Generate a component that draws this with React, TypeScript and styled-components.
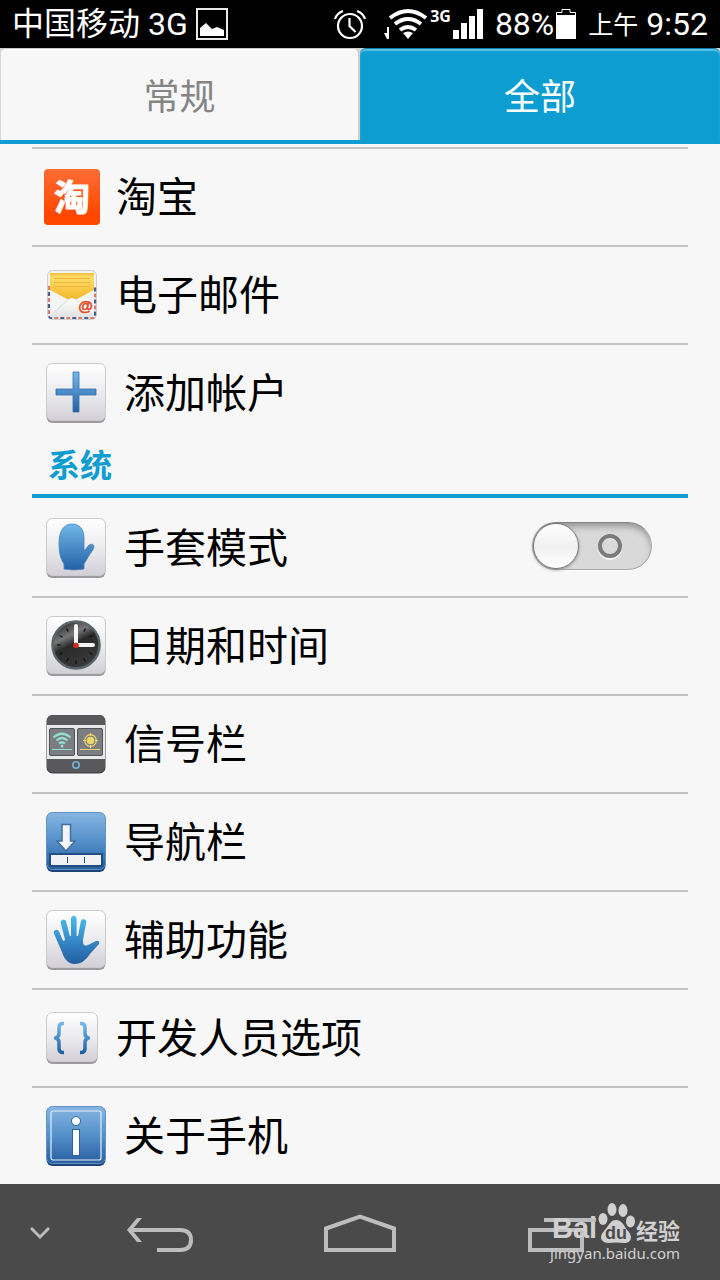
import React, { useState } from "react";
import styled, { createGlobalStyle } from "styled-components";

const blue = "#0d9dd1";

const GlobalStyle = createGlobalStyle`
  *, *::before, *::after { box-sizing: border-box; }
  body {
    margin: 0;
    background: #f7f7f7;
    font-family: Roboto, "Noto Sans CJK SC", sans-serif;
    color: #000;
  }
  button { font-family: inherit; }
  svg { display: block; flex: none; }
`;

const Screen = styled.div`
  min-height: 100vh;
  display: flex;
  flex-direction: column;
`;

const StatusBar = styled.header`
  height: 48px;
  padding: 0 12px;
  background: #000;
  color: #fff;
  font-size: 32px;
  line-height: 48px;
  display: flex;
  align-items: center;
  justify-content: space-between;
  white-space: nowrap;
`;

const StatusGroup = styled.div`
  display: flex;
  align-items: center;
  gap: 8px;
`;

const Signal = styled.div`
  display: flex;
  align-items: center;
  gap: 2px;
  margin: 0 4px 0 10px;
`;

const Network = styled.span`
  align-self: flex-start;
  font: 700 16px/16px "Open Sans", sans-serif;
`;

const Battery = styled.div`
  display: flex;
  align-items: center;
  gap: 2px;
`;

const Meridiem = styled.span`
  font-size: 25px;
  margin-left: 4px;
  padding-top: 4px;
`;

const Tabs = styled.nav`
  display: grid;
  grid-template-columns: 1fr 1fr;
  height: 96px;
  border-bottom: 4px solid ${blue};
  background: #d4d4d4;
`;

const Tab = styled.button<{ $active?: boolean }>`
  border: 0;
  border-top: 1px solid ${(p) => (p.$active ? "#0a7fab" : "#c9c9c9")};
  border-right: ${(p) => (p.$active ? "0" : "2px solid #cfcfcf")};
  border-left: ${(p) => (p.$active ? "0" : "1px solid #d8d8d8")};
  border-radius: 6px 6px 0 0;
  padding: 6px 0 0;
  font-size: 36px;
  line-height: 48px;
  color: ${(p) => (p.$active ? "#fff" : "#858585")};
  background: ${(p) => (p.$active ? blue : "#f7f7f7")};
  box-shadow: inset 0 2px 1px ${(p) => (p.$active ? "#5fc0e4" : "#fff")};
`;

const Content = styled.main`
  flex: 1;
  padding: 3px 32px 0;
`;

const List = styled.ul`
  list-style: none;
  margin: 0;
  padding: 0;
`;

const Item = styled.li`
  border-top: 2px solid #c4c4c4;
  &[data-first="true"] { border-top-color: transparent; }
`;

const Row = styled.button`
  width: 100%;
  height: 96px;
  padding: 0 36px 0 12px;
  border: 0;
  background: none;
  color: inherit;
  display: flex;
  align-items: center;
  gap: 16px;
  font-size: 41px;
  line-height: 60px;
  text-align: left;
`;

const IconSlot = styled.span<{ $small?: boolean }>`
  width: ${(p) => (p.$small ? 56 : 64)}px;
  flex: none;
  display: flex;
  justify-content: center;
`;

const Label = styled.span`
  flex: 1;
  padding-top: 2px;
`;

const SectionTitle = styled.h2`
  margin: 0;
  height: 57px;
  padding-left: 16px;
  border-bottom: 4px solid ${blue};
  color: ${blue};
  font-size: 32px;
  font-weight: 700;
  line-height: 50px;
`;

const Toggle = styled.input`
  appearance: none;
  margin: 0 0 4px;
  width: 120px;
  height: 48px;
  flex: none;
  border-radius: 24px;
  border: 1px solid #a9a9a9;
  border-top-color: #858585;
  background: #d9d9d9;
  box-shadow: inset 0 5px 7px -2px #8e8e8e, 0 1px 0 #fff;
  display: flex;
  align-items: center;
  gap: 19px;
  &::before {
    content: "";
    width: 46px;
    height: 46px;
    border-radius: 50%;
    border: 1px solid #777;
    background: linear-gradient(#fff, #f0f0f0 50%, #fff);
    box-shadow: 0 1px 3px #888;
  }
  &::after {
    content: "";
    width: 24px;
    height: 24px;
    border-radius: 50%;
    border: 4px solid #7b7b7b;
    box-shadow: 0 2px 0 #f4f4f4, inset 0 1px 0 #eee;
  }
  &:checked { background: ${blue}; flex-direction: row-reverse; }
`;

const NavBar = styled.footer`
  position: relative;
  height: 96px;
  background: #4a4a4b;
  display: grid;
  grid-template-columns: 1fr 2fr 3fr 2fr 1fr;
`;

const NavButton = styled.button`
  border: 0;
  padding: 0;
  background: none;
  color: #bdbdbd;
  display: flex;
  align-items: center;
  justify-content: center;
`;

const Watermark = styled.div`
  position: absolute;
  right: 40px;
  top: 15px;
  width: 128px;
  color: #d0d0d0;
  pointer-events: none;
`;

const Brand = styled.div`
  display: flex;
  align-items: flex-end;
  justify-content: space-between;
  height: 46px;
  font: 700 29px/34px "Liberation Sans", sans-serif;
`;

const Paw = styled.svg`
  margin: 0 -2px 1px;
`;

const BrandCn = styled.span`
  font: 700 22px/32px "Noto Sans CJK SC", sans-serif;
`;

const Site = styled.div`
  display: flex;
  justify-content: flex-end;
  font: 400 15px/16px "Noto Sans", sans-serif;
`;

function Tile({ id, size = 60, dark, children }: { id: string; size?: number; dark?: boolean; children: React.ReactNode }) {
  return (
    <svg width={size} height={size} viewBox={`0 0 ${size} ${size}`} aria-hidden="true">
      <defs>
        <linearGradient id={`${id}-bg`} x1="0" y1="0" x2="0" y2="1">
          <stop offset="0" stopColor={dark ? "#86b6e2" : "#ffffff"} />
          <stop offset="0.5" stopColor={dark ? "#5490ca" : "#ececef"} />
          <stop offset="1" stopColor={dark ? "#285f9f" : "#d2cfd6"} />
        </linearGradient>
        <linearGradient id={`${id}-fg`} x1="0" y1="0" x2="0" y2="1">
          <stop offset="0" stopColor="#72b9ea" />
          <stop offset="1" stopColor="#2260a4" />
        </linearGradient>
      </defs>
      <rect x="0.5" y="1" width={size - 1} height={size - 1} rx="6" fill={dark ? "#1c4377" : "#9b9b9f"} />
      <rect x="0.5" y="0.5" width={size - 1} height={size - 3} rx="6" fill={`url(#${id}-bg)`} stroke={dark ? "#5f93c8" : "#cbcbcd"} />
      {children}
    </svg>
  );
}

const TaobaoIcon = () => (
  <svg width="56" height="56" viewBox="0 0 56 56" aria-hidden="true">
    <defs>
      <linearGradient id="taobao" x1="0" y1="0" x2="0" y2="1">
        <stop offset="0" stopColor="#ff6d35" />
        <stop offset="0.8" stopColor="#ff4700" />
      </linearGradient>
    </defs>
    <rect width="56" height="56" rx="4" fill="url(#taobao)" />
    <text x="28" y="42" textAnchor="middle" fontSize="36" fontWeight="700" fill="#fff" stroke="#fff" strokeWidth="1" strokeLinejoin="round" fontFamily="'Noto Sans CJK SC', sans-serif">淘</text>
  </svg>
);

const MailIcon = () => (
  <svg width="50" height="50" viewBox="0 0 50 50" aria-hidden="true">
    <defs>
      <linearGradient id="letter" x1="0" y1="0" x2="0" y2="1">
        <stop offset="0" stopColor="#f0c03a" />
        <stop offset="0.15" stopColor="#ffdc68" />
        <stop offset="1" stopColor="#f3b92c" />
      </linearGradient>
      <linearGradient id="flap" x1="0" y1="0" x2="0" y2="1">
        <stop offset="0" stopColor="#fff" />
        <stop offset="1" stopColor="#e2e2e2" />
      </linearGradient>
    </defs>
    <rect x="0.5" y="0.5" width="49" height="49" rx="5" fill="#f2f2f2" stroke="#d0d0d0" />
    <path d="M2 16V45q0 3 3 3H45q3 0 3-3V16" fill="none" stroke="#e07a68" strokeWidth="2.200" strokeDasharray="4 8" />
    <path d="M2 22V45q0 3 3 3H45q3 0 3-3V16" fill="none" stroke="#4a5c8e" strokeWidth="2.200" strokeDasharray="4 8" />
    <path d="M3 18H47V47H3z" fill="#f4f4f4" />
    <path d="M3 3H47V20L30 29H20L3 20z" fill="url(#letter)" />
    <path d="M7 8.500H43M7 12.500H43M7 16.500H43" stroke="#ecb840" />
    <path d="M3 47L22 29q3-2 6 0L47 47z" fill="url(#flap)" />
    <path d="M3 46L22 29q3-2 6 0L47 46" fill="none" stroke="#cacaca" strokeWidth="0.700" />
    <circle cx="38.500" cy="36.500" r="7.500" fill="#fff" />
    <text x="38.500" y="41" textAnchor="middle" fontSize="15" fontWeight="700" fill="#e2491d" stroke="#e2491d" strokeWidth="0.500" fontFamily="'Liberation Sans', sans-serif">@</text>
  </svg>
);

const AddIcon = () => (
  <Tile id="add">
    <path d="M27 9h6v17h17v6H33v17h-6V32H10v-6h17z" fill="url(#add-fg)" stroke="#3672ae" strokeWidth="0.800" />
  </Tile>
);

const GloveIcon = () => (
  <Tile id="glove">
    <path d="M18 51v-5C14 40 13 34 13 25 13 13 18 6 26 6c8 0 12 6 12 14v13l5-6q4-2 5 1c0 3-2 5-4 8L38 46v5q-10 2-20 0z" fill="url(#glove-fg)" stroke="#4d84bc" strokeWidth="0.800" />
  </Tile>
);

const ClockIcon = () => (
  <Tile id="clock">
    <defs>
      <linearGradient id="dial" x1="0.200" y1="0" x2="0.700" y2="1">
        <stop offset="0" stopColor="#242424" />
        <stop offset="0.300" stopColor="#777" />
        <stop offset="0.480" stopColor="#2a2a2a" />
        <stop offset="1" stopColor="#3b3b3b" />
      </linearGradient>
    </defs>
    <circle cx="30" cy="29" r="23.500" fill="url(#dial)" stroke="#59656b" strokeWidth="2.500" />
    {Array.from({ length: 12 }, (_, i) => (
      <path key={i} d="M30 10v3.500" stroke="#111" strokeWidth="1.300" transform={`rotate(${i * 30} 30 29)`} />
    ))}
    <path d="M30 10v19h17" fill="none" stroke="#f4f4f4" strokeWidth="4" strokeLinecap="round" />
    <circle cx="30" cy="29.500" r="2.800" fill="#d4281c" />
  </Tile>
);

const SignalBarIcon = () => (
  <svg width="60" height="60" viewBox="0 0 60 60" aria-hidden="true">
    <rect x="0.500" y="1" width="59" height="58.500" rx="6" fill="#48484a" />
    <rect x="1" y="1" width="58" height="57" rx="6" fill="#59595b" />
    <rect x="1" y="11" width="58" height="34" fill="#e9e9ec" />
    <rect x="3.500" y="14.500" width="25" height="27" rx="1.500" fill="#7b7d83" stroke="#515256" />
    <rect x="31.500" y="14.500" width="25" height="27" rx="1.500" fill="#7b7d83" stroke="#515256" />
    <g fill="none" stroke="#8fe0cf" strokeWidth="2.200">
      <path d="M7.500 23.500q8.500-7.500 17 0M10.500 26.500q5.500-5 11 0M13 29.500q3-2.500 6 0" />
      <path d="M6 35.500h20" strokeWidth="1" />
    </g>
    <circle cx="16" cy="32" r="1.500" fill="#8fe0cf" />
    <circle cx="44.500" cy="26.500" r="3.800" fill="#f0d66a" />
    <circle cx="44.500" cy="26.500" r="5.800" fill="none" stroke="#f0d66a" strokeWidth="1.200" />
    <path d="M44.500 19v3M44.500 31v3M37 26.500h3M49 26.500h3M34 35.500h20" stroke="#f0d66a" strokeWidth="1.200" />
    <circle cx="30" cy="51" r="3.200" fill="none" stroke="#71b5dc" strokeWidth="1.600" />
  </svg>
);

const NavigationBarIcon = () => (
  <Tile id="navigation" dark>
    <rect x="3" y="41" width="54" height="14" rx="1" fill="#1f4d84" />
    <rect x="5" y="43" width="50" height="10" fill="#f1f1f3" />
    <path d="M21.500 45v6M38.500 45v6" stroke="#1f4d84" />
    <path d="M16 12.500h8.500V29H29L20 39 11 29h5z" fill="#f4f4f6" stroke="#426f9f" strokeWidth="1.500" />
  </Tile>
);

const HandIcon = () => (
  <Tile id="hand">
    <defs>
      <linearGradient id="palm" gradientUnits="userSpaceOnUse" x1="0" y1="5" x2="0" y2="54">
        <stop offset="0" stopColor="#4cc0ee" />
        <stop offset="0.550" stopColor="#3585c4" />
        <stop offset="1" stopColor="#225f9f" />
      </linearGradient>
    </defs>
    <path d="M10.500 22.500L18 40M17.500 12.500L23 34M37.500 12L33 36" fill="none" stroke="url(#palm)" strokeWidth="5.500" strokeLinecap="round" />
    <path d="M25 8q2.800-5 5.600 0v28H25z" fill="url(#palm)" />
    <path d="M13 29l5 2 4-5h13l2 5q0 6 5 4l8-4q4-1 3 3L44 44q-6 10-16 10-6 0-10-7-3-6-5-18z" fill="url(#palm)" />
  </Tile>
);

const BracesIcon = () => (
  <Tile id="braces" size={52}>
    <path d="M18 11.500h-1q-4 0-4 4v6q0 3.500-3.500 4.500 3.500 1 3.500 4.500v6q0 4 4 4h1M34 11.500h1q4 0 4 4v6q0 3.500 3.500 4.500-3.500 1-3.500 4.500v6q0 4-4 4h-1" fill="none" stroke="url(#braces-fg)" strokeWidth="3.500" strokeLinejoin="round" />
  </Tile>
);

const InfoIcon = () => (
  <Tile id="info" dark>
    <rect x="5" y="5" width="50" height="49" rx="2" fill="none" stroke="#e3effa" strokeWidth="1.200" />
    <circle cx="30" cy="15" r="4.500" fill="#fff" stroke="#2b629c" />
    <rect x="26.500" y="23.500" width="7" height="26" fill="#fff" stroke="#2b629c" />
  </Tile>
);

interface Entry {
  label: string;
  icon: React.ReactNode;
  small?: boolean;
}

const accounts: Entry[] = [
  { label: "淘宝", icon: <TaobaoIcon />, small: true },
  { label: "电子邮件", icon: <MailIcon />, small: true },
  { label: "添加帐户", icon: <AddIcon /> },
];

const system: Entry[] = [
  { label: "日期和时间", icon: <ClockIcon /> },
  { label: "信号栏", icon: <SignalBarIcon /> },
  { label: "导航栏", icon: <NavigationBarIcon /> },
  { label: "辅助功能", icon: <HandIcon /> },
  { label: "开发人员选项", icon: <BracesIcon />, small: true },
  { label: "关于手机", icon: <InfoIcon /> },
];

const EntryItem = ({ label, icon, small }: Entry) => (
  <Item>
    <Row type="button">
      <IconSlot $small={small}>{icon}</IconSlot>
      <Label>{label}</Label>
    </Row>
  </Item>
);

export default function App() {
  const [glove, setGlove] = useState(false);
  return (
    <Screen>
      <GlobalStyle />
      <StatusBar>
        <StatusGroup>
          <span>中国移动 3G</span>
          <svg width="32" height="32" viewBox="0 0 32 32" aria-hidden="true">
            <rect x="1" y="1" width="30" height="30" fill="none" stroke="#e8e8e8" strokeWidth="2" />
            <path d="M4 28v-8l6-5 6 6 5-2 7 3v6z" fill="#fff" />
          </svg>
        </StatusGroup>
        <StatusGroup>
          <svg width="32" height="32" viewBox="0 0 32 32" fill="none" stroke="#fff" strokeWidth="2.200" aria-hidden="true">
            <circle cx="16" cy="18" r="12" />
            <path d="M15.500 10v8l6 6M1 11q2-6 8-8M31 11q-2-6-8-8" />
          </svg>
          <Signal>
            <svg width="44" height="32" viewBox="0 0 44 32" aria-hidden="true">
              <path d="M3 19h2v12H3l-3-6h3z" fill="#fff" />
              <g fill="none" stroke="#fff" strokeWidth="4">
                <path d="M6 10Q24-4 42 10" />
                <path d="M11 16q13-10 26 0" />
                <path d="M16 22q8-6 16 0" />
              </g>
              <path d="M19 25q5-3 10 0l-5 6z" fill="#fff" />
            </svg>
            <Network>3G</Network>
            <svg width="30" height="30" viewBox="0 0 30 30" fill="#fff" aria-hidden="true">
              <path d="M0 21h6v9H0zM8 14h6v16H8zM16 7h6v23h-6zM24 0h6v30h-6z" />
            </svg>
          </Signal>
          <Battery>
            <span>88%</span>
            <svg width="20" height="30" viewBox="0 0 20 30" aria-hidden="true">
              <path d="M0 6h20v24H0z" fill="#fff" />
              <path d="M0.500 6V3.500H6V0.500h8v3h5.500V6" fill="#000" stroke="#fff" />
            </svg>
          </Battery>
          <Meridiem>上午</Meridiem>
          <span>9:52</span>
        </StatusGroup>
      </StatusBar>
      <Tabs>
        <Tab type="button">常规</Tab>
        <Tab type="button" $active>全部</Tab>
      </Tabs>
      <Content>
        <List>
          {accounts.map((e) => <EntryItem key={e.label} {...e} />)}
        </List>
        <SectionTitle>系统</SectionTitle>
        <List>
          <Item data-first="true">
            <Row as="label">
              <IconSlot><GloveIcon /></IconSlot>
              <Label>手套模式</Label>
              <Toggle type="checkbox" checked={glove} onChange={(e) => setGlove(e.target.checked)} />
            </Row>
          </Item>
          {system.map((e) => <EntryItem key={e.label} {...e} />)}
        </List>
      </Content>
      <NavBar>
        <NavButton type="button" aria-label="隐藏导航栏">
          <svg width="24" height="24" viewBox="0 0 24 24" fill="none" stroke="currentColor" strokeWidth="3">
            <path d="M3 8l9 9 9-9" />
          </svg>
        </NavButton>
        <NavButton type="button" aria-label="返回">
          <svg width="72" height="48" viewBox="0 0 72 48" fill="currentColor" aria-hidden="true">
            <path d="M6 22h50q11 0 11 10t-11 10H33" fill="none" stroke="currentColor" strokeWidth="4" />
            <path d="M13 10h5L8 22l10 12h-5L3 22z" />
          </svg>
        </NavButton>
        <NavButton type="button" aria-label="主屏幕">
          <svg width="72" height="48" viewBox="0 0 72 48" fill="none" stroke="currentColor" strokeWidth="4">
            <path d="M2 20.500L36 8.500l34 12V42H2z" />
          </svg>
        </NavButton>
        <NavButton type="button" aria-label="最近任务">
          <svg width="80" height="48" viewBox="0 0 80 48" fill="none" stroke="currentColor" strokeWidth="4">
            <path d="M10 22h52v20H10zM24 12h52" />
          </svg>
        </NavButton>
        <Watermark>
          <Brand>
            <span>Bai</span>
            <Paw width="38" height="42" viewBox="0 0 38 42" fill="currentColor" aria-hidden="true">
              <ellipse cx="5" cy="17" rx="4.500" ry="6" />
              <ellipse cx="14" cy="7.500" rx="4.500" ry="6.500" />
              <ellipse cx="25" cy="8.500" rx="4.500" ry="6.500" />
              <ellipse cx="32.500" cy="19.500" rx="4.500" ry="6" />
              <path d="M18 18c7 0 8 7 12 11s5 12-4 12q-8-1-15 0c-9 0-10-7-5-12s6-11 12-11z" />
              <text x="18" y="37" textAnchor="middle" fontSize="18" fontWeight="700" fill="#4a4a4b">du</text>
            </Paw>
            <BrandCn>经验</BrandCn>
          </Brand>
          <Site>jingyan.baidu.com</Site>
        </Watermark>
      </NavBar>
    </Screen>
  );
}
